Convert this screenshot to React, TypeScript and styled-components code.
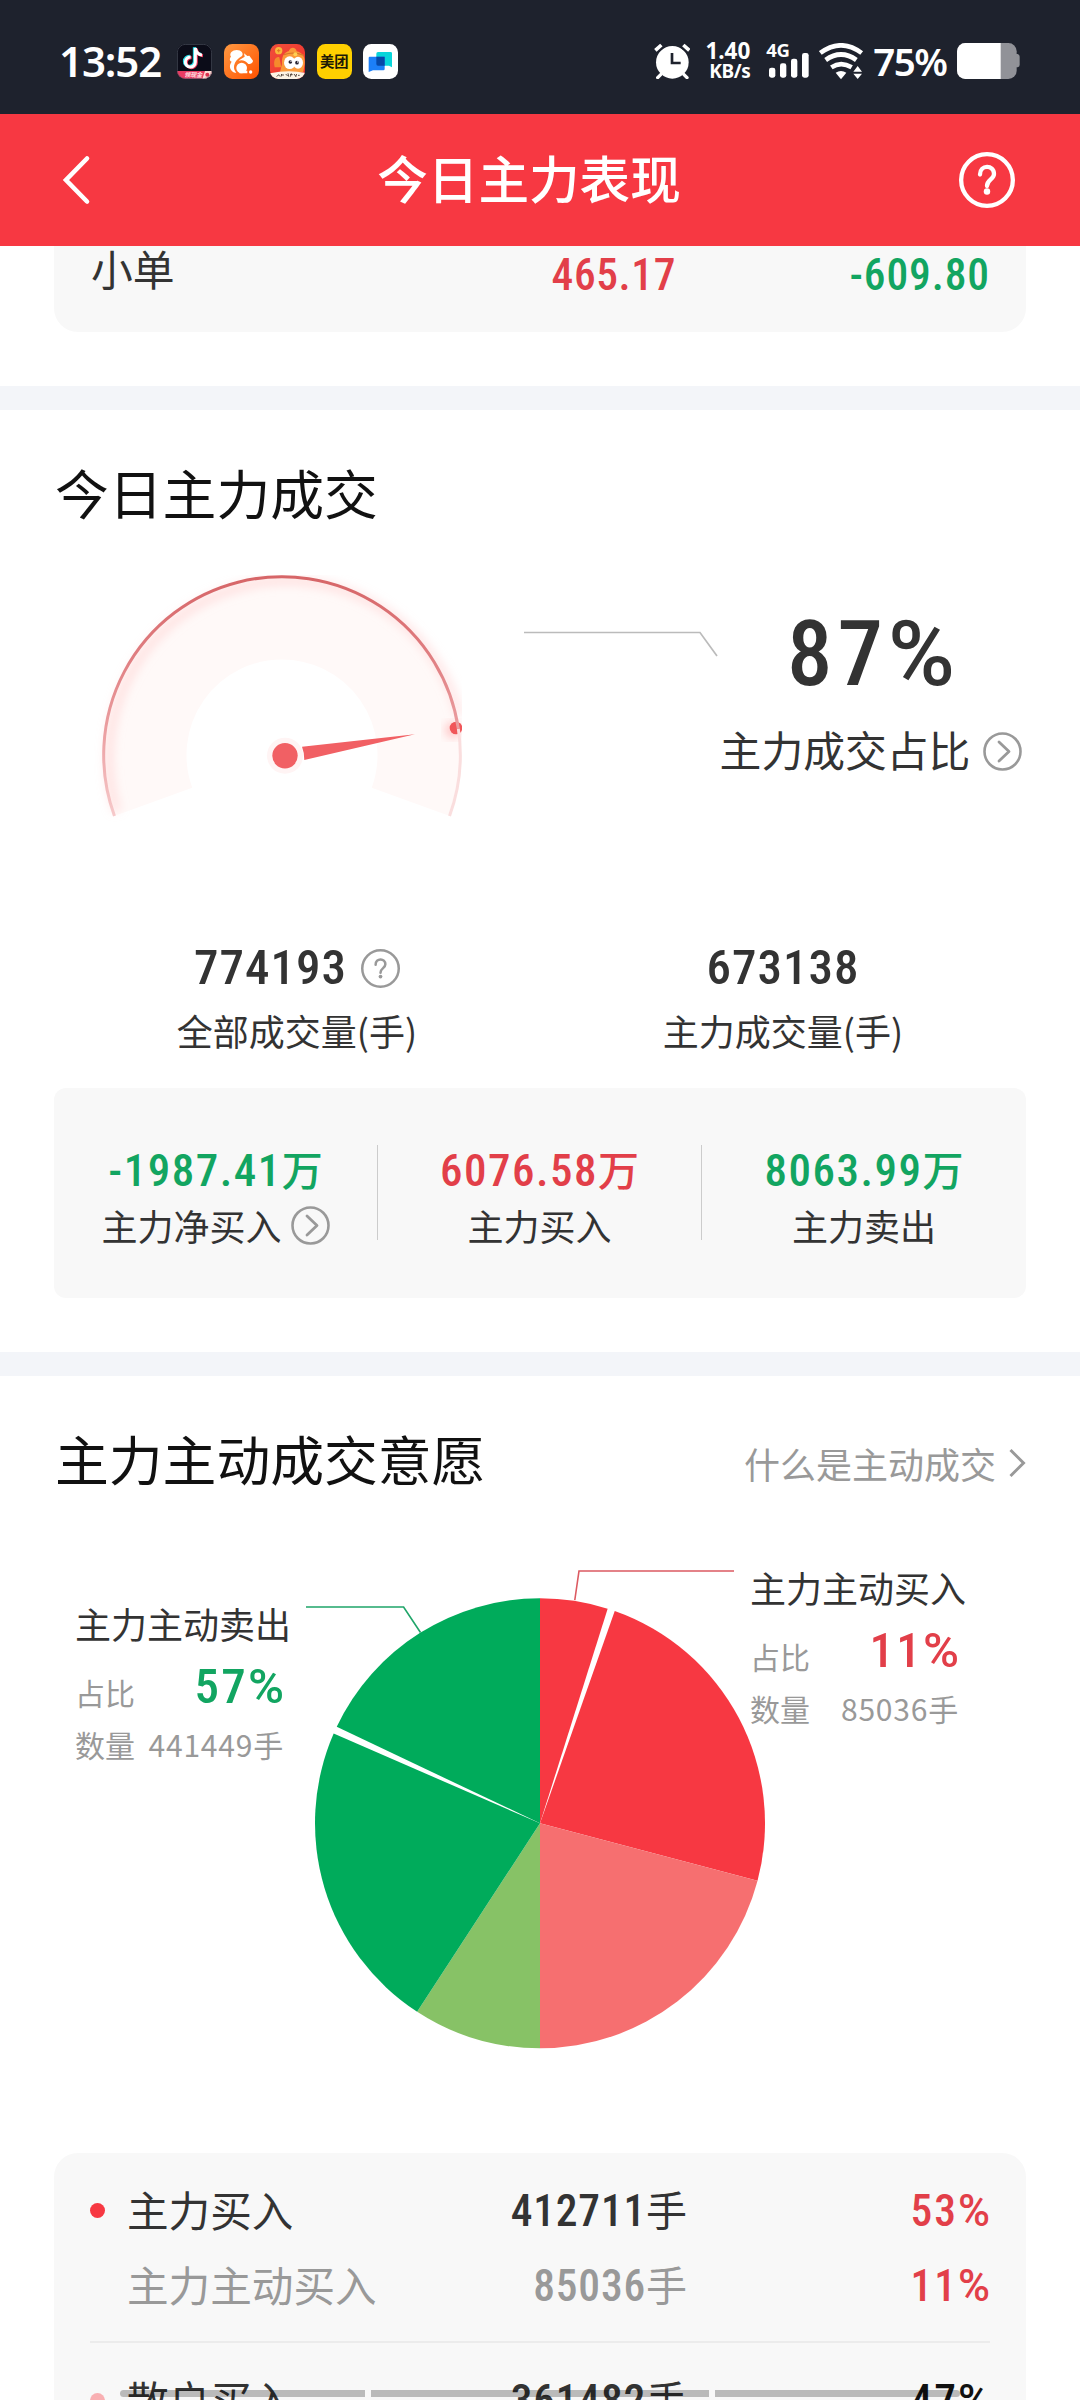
import React from 'react';
import styled, { createGlobalStyle } from 'styled-components';

const RED = '#f73842';
const RED_TEXT = '#e23f49';
const GREEN = '#00ab5b';
const GREEN_TEXT = '#12a561';
const INK = '#333333';
const MUTED = '#999999';

const CJK = `'Noto Sans CJK SC', 'Noto Sans', sans-serif`;
const DIN = `'Roboto Condensed', Roboto, 'Noto Sans CJK SC', sans-serif`;

const GlobalStyle = createGlobalStyle`
  html, body { margin: 0; padding: 0; background: #fff; }
  * { box-sizing: border-box; }
  svg { display: block; flex: none; }
`;

const Page = styled.div`
  position: relative;
  width: 1080px;
  height: 2400px;
  overflow: hidden;
  background: #fff;
  color: ${INK};
  font-family: ${CJK};
`;

/* ---------- status bar ---------- */

const StatusBar = styled.div`
  display: flex;
  align-items: center;
  height: 114px;
  padding: 8px 60px 0 59px;
  background: #1e222d;
  color: #fff;
  font-family: 'Noto Sans', sans-serif;
`;

const Clock = styled.div`
  width: 118px;
  font-size: 42px;
  line-height: 44px;
  font-weight: 600;
  letter-spacing: -1.1px;
  white-space: nowrap;
`;

const AppIcons = styled.div`
  display: flex;
  gap: 11.6px;
  flex: 1;
`;

const StatusRight = styled.div`
  display: flex;
  align-items: center;
`;

const Speed = styled.div`
  display: flex;
  flex-direction: column;
  align-items: flex-end;
  width: 60px;
  font-weight: 700;
`;

const SpeedValue = styled.span`
  font-size: 22.5px;
  line-height: 20px;
`;

const SpeedUnit = styled.span`
  font-size: 19px;
  line-height: 20px;
  letter-spacing: -0.4px;
`;

const Signal = styled.div`
  display: flex;
  flex-direction: column;
  align-items: flex-start;
  width: 50px;
  height: 36px;
  margin-left: 19px;
`;

const SignalLabel = styled.span`
  height: 10px;
  margin-left: -3px;
  font-size: 18.5px;
  line-height: 13px;
  font-weight: 700;
  letter-spacing: -0.5px;
`;

const BatteryText = styled.span`
  width: 84px;
  margin-left: 9px;
  font-size: 38.5px;
  line-height: 40px;
  font-weight: 600;
  letter-spacing: -1.6px;
  white-space: nowrap;
`;

/* ---------- header ---------- */

const Header = styled.div`
  display: flex;
  align-items: center;
  justify-content: space-between;
  height: 132px;
  padding: 0 65px 0 61px;
  background: ${RED};
`;

const HeaderTitle = styled.h1`
  margin: 0;
  padding: 0 0 7px 6px;
  font-size: 50.6px;
  line-height: 60px;
  font-weight: 500;
  color: #fff;
`;

/* ---------- shared ---------- */

const Num = styled.span<{ $size: number; $color?: string; $spacing?: number }>`
  display: block;
  font-family: ${DIN};
  font-size: ${p => p.$size}px;
  font-weight: 500;
  letter-spacing: ${p => p.$spacing ?? 0}px;
  color: ${p => p.$color ?? INK};
  white-space: nowrap;
`;

const PercentSign = styled.span`
  font-family: Roboto, sans-serif;
  letter-spacing: 0;
`;

const Band = styled.div`
  height: 24px;
  background: #f3f5f9;
`;

const Section = styled.section`
  padding: 45px 54px 0;
`;

const SectionHead = styled.div`
  display: flex;
  align-items: center;
  justify-content: space-between;
  height: 72px;
`;

const SectionTitle = styled.h2`
  margin: 0;
  padding: 1px 0 0 1px;
  font-size: 53.8px;
  line-height: 72px;
  font-weight: 400;
  color: #111;
`;

/* ---------- order size table tail ---------- */

const OrderCard = styled.div`
  display: grid;
  grid-template-columns: 585px 1fr;
  height: 86px;
  margin: 0 54px 54px;
  padding: 0 36px 0 37px;
  border-radius: 0 0 24px 24px;
  background: #f8f8f8;
`;

const OrderLeft = styled.div`
  display: flex;
  justify-content: space-between;
  line-height: 59px;
`;

const OrderLabel = styled.span`
  font-size: 41.8px;
  line-height: 45px;
`;

const OrderRight = styled.div`
  text-align: right;
  line-height: 59px;
`;

/* ---------- gauge ---------- */

const GaugeRow = styled.div`
  display: flex;
  height: 280px;
  margin-top: 33px;
`;

const Callout = styled.div`
  width: 226px;
  padding: 60px 0 0 24px;
`;

const RatioBlock = styled.div`
  display: flex;
  flex-direction: column;
  align-items: center;
  width: 302px;
  padding-top: 44px;
`;

const RatioValue = styled(Num)`
  line-height: 100px;
`;

const RatioLabel = styled.div`
  display: flex;
  align-items: center;
  gap: 13px;
  height: 44px;
  margin-top: 25px;
  font-size: 41.8px;
  line-height: 38px;
  white-space: nowrap;
`;

const LabelText = styled.span`
  padding-bottom: 5px;
`;

const Totals = styled.div`
  display: grid;
  grid-template-columns: 1fr 1fr;
  margin-top: 100px;
`;

const TotalCell = styled.div`
  display: flex;
  flex-direction: column;
  align-items: center;
`;

const TotalValue = styled.div`
  display: flex;
  align-items: center;
  gap: 14px;
  height: 56px;
  line-height: 56px;
`;

const TotalLabel = styled.div`
  margin-top: 10px;
  font-size: 36px;
  line-height: 48px;
`;

const StatsCard = styled.div`
  display: grid;
  grid-template-columns: repeat(3, 1fr);
  align-items: start;
  height: 210px;
  margin: 34px 0 54px;
  padding-top: 57px;
  border-radius: 12px;
  background: #f8f8f8;
`;

const StatCell = styled.div`
  display: flex;
  flex-direction: column;
  align-items: center;
  height: 95px;
  &:not(:last-child) { border-right: 1px solid #ccc; }
`;

const StatValue = styled(Num)`
  line-height: 52px;
`;

const StatLabel = styled.div`
  display: flex;
  align-items: center;
  gap: 9px;
  height: 40px;
  margin-top: 7px;
  font-size: 36px;
  line-height: 40px;
`;

/* ---------- pie ---------- */

const MoreLink = styled.div`
  display: flex;
  align-items: center;
  gap: 12px;
  padding-top: 11px;
  font-size: 36px;
  line-height: 48px;
  color: ${MUTED};
`;

const Chart = styled.div`
  display: grid;
  height: 660px;
  margin: 0 -54px;
  & > * { grid-area: 1 / 1; }
`;

const PieLabel = styled.div<{ $left: number; $top: number }>`
  width: 209px;
  margin: ${p => p.$top}px 0 0 ${p => p.$left}px;
  align-self: start;
`;

const PieName = styled.div`
  font-size: 36px;
  line-height: 44px;
  white-space: nowrap;
`;

const PieRow = styled.div<{ $h: number; $gap: number }>`
  display: flex;
  justify-content: space-between;
  align-items: baseline;
  height: ${p => p.$h}px;
  margin-top: ${p => p.$gap}px;
  font-size: 30px;
  line-height: ${p => p.$h}px;
  color: ${MUTED};
  white-space: nowrap;
`;

const RatioKey = styled.span`
  position: relative;
  top: 2px;
`;

const Quantity = styled.span`
  letter-spacing: 0.8px;
`;

/* ---------- detail table ---------- */

const DetailCard = styled.div`
  height: 300px;
  padding: 20px 36px 0;
  border-radius: 24px 24px 0 0;
  background: #f8f8f8;
`;

const DetailRow = styled.div`
  display: grid;
  grid-template-columns: 37px 1fr 261px 303px;
  align-items: center;
  height: 75px;
  line-height: 58px;
  text-align: right;
  & > ${Num} { padding-top: 2px; }
`;

const Dot = styled.i<{ $color: string }>`
  width: 15px;
  height: 15px;
  border-radius: 50%;
  background: ${p => p.$color};
`;

const DetailName = styled.span<{ $muted?: boolean }>`
  padding-bottom: 4px;
  font-size: 41.6px;
  text-align: left;
  color: ${p => (p.$muted ? MUTED : INK)};
`;

const Unit = styled.span<{ $light?: boolean }>`
  font-size: 41px;
  font-weight: ${p => (p.$light ? 400 : 500)};
  letter-spacing: 0;
`;

const Rule = styled.div`
  height: 2px;
  margin: 18px 0 20px;
  background: #ececec;
`;

const NavHint = styled.div`
  position: absolute;
  left: 120px;
  top: 2390px;
  display: grid;
  grid-template-columns: 245px 338px 245px;
  gap: 6px;
  height: 7px;
`;

const NavPart = styled.i<{ $side?: 'l' | 'r' }>`
  background: rgba(0, 0, 0, 0.25);
  border-radius: ${p => (p.$side === 'l' ? '4px 0 0 4px' : p.$side === 'r' ? '0 4px 4px 0' : '0')};
`;

/* ---------- icons ---------- */

const TikTokIcon = () => (
  <svg width="35" height="35" viewBox="0 0 105 105">
    <defs><clipPath id="tt"><rect width="105" height="105" rx="25" /></clipPath></defs>
    <g clipPath="url(#tt)">
      <rect width="105" height="105" fill="#0b0c18" />
      <g fill="none" strokeWidth="9">
        <g stroke="#25d9e6" transform="translate(-3,-2)"><path d="M41 39a15 15 0 1 0 14 15V12c2 13 9 20 20 21" /></g>
        <g stroke="#f23a5d" transform="translate(3,2)"><path d="M41 39a15 15 0 1 0 14 15V12c2 13 9 20 20 21" /></g>
        <path d="M41 39a15 15 0 1 0 14 15V12c2 13 9 20 20 21" stroke="#fff" />
      </g>
      <path d="M0 81H105V105H0Z" fill="#e93c63" />
      <path d="M84 81H105V105H76Z" fill="#ffd9d2" />
      <circle cx="91" cy="92" r="6" fill="#d9304e" />
      <text x="22" y="100" fontSize="18" fontWeight="700" fontStyle="italic" fill="#ffe3e3" fontFamily="Noto Sans CJK SC, sans-serif">领现金</text>
      <rect x="1" y="1" width="103" height="103" rx="24" fill="none" stroke="#555a66" strokeWidth="2" />
    </g>
  </svg>
);

const SquirrelIcon = () => (
  <svg width="35" height="35" viewBox="0 0 105 105">
    <defs>
      <linearGradient id="uc" x1="0" y1="0" x2="1" y2="1">
        <stop offset="0" stopColor="#ff9a42" /><stop offset="1" stopColor="#ff5200" />
      </linearGradient>
    </defs>
    <rect width="105" height="105" rx="25" fill="url(#uc)" />
    <path d="M27 84C15 74 16 62 23 53C15 50 17 42 21 38C14 28 26 18 38 18C52 18 60 28 54 36C42 43 30 54 30 70C30 77 33 82 37 86C33 87 30 86 27 84Z" fill="#fff" />
    <path d="M44 50C48 46 56 42 62 38L60 28L70 36L76 35L87 50C86 58 78 60 73 60C66 50 54 46 44 50Z" fill="#fff" />
    <circle cx="53" cy="72" r="16" fill="#fff" />
    <path d="M52 80H70V88H46Z" fill="#fff" />
    <circle cx="80" cy="84" r="5" fill="#fff" />
  </svg>
);

const MonkeyIcon = () => (
  <svg width="35" height="35" viewBox="0 0 105 105">
    <defs>
      <clipPath id="mk"><rect width="105" height="105" rx="25" /></clipPath>
      <linearGradient id="mkbg" x1="0" y1="0" x2="1" y2="1">
        <stop offset="0" stopColor="#f0503a" /><stop offset="1" stopColor="#f02c2c" />
      </linearGradient>
    </defs>
    <g clipPath="url(#mk)">
      <rect width="105" height="105" fill="url(#mkbg)" />
      <path d="M14 70C8 46 20 36 28 40L34 70Z" fill="#f58a2c" />
      <path d="M36 60C34 34 46 24 56 22C62 6 78 10 80 22C98 26 106 40 104 60L100 84H30Z" fill="#fb9a3a" />
      <path d="M42 32Q70 22 102 34" stroke="#d8782a" strokeWidth="4" fill="none" />
      <circle cx="76" cy="31" r="6" fill="#ffcf52" />
      <circle cx="26" cy="20" r="11" fill="#f9b83c" />
      <path d="M21 20H31M26 15V25" stroke="#e27a20" strokeWidth="3" />
      <ellipse cx="59" cy="56" rx="17" ry="19" fill="#fff" />
      <ellipse cx="84" cy="56" rx="15" ry="18" fill="#fff" />
      <circle cx="61" cy="54" r="5.5" fill="#282432" />
      <circle cx="81" cy="56" r="5.5" fill="#282432" />
      <circle cx="63" cy="52" r="2" fill="#fff" />
      <circle cx="83" cy="54" r="2" fill="#fff" />
      <path d="M0 88Q52 76 105 86V105H0Z" fill="#fbf3e4" />
      <path d="M20 98l6-6 3 5M35 90l-2 8M34 93h8M47 90l6 6M54 88l2 10M60 92h8M64 88l-3 10M72 90l6 8M80 90l-3 8M84 94h5" stroke="#3a2a22" strokeWidth="2.5" fill="none" />
    </g>
  </svg>
);

const MeituanIcon = () => (
  <svg width="35" height="35" viewBox="0 0 105 105">
    <rect width="105" height="105" rx="25" fill="#ffd000" />
    <text x="52" y="68" textAnchor="middle" fontSize="43" fontWeight="700" fill="#1d1a06" fontFamily="Noto Sans CJK SC, sans-serif">美团</text>
  </svg>
);

const ChatIcon = () => (
  <svg width="35" height="35" viewBox="0 0 105 105">
    <rect width="105" height="105" rx="25" fill="#fff" />
    <path d="M45 24H83Q87 24 87 28V70L78 65H40V29Q40 24 45 24Z" fill="#08d5da" />
    <path d="M20 38H65V75Q65 79 61 79H30L17 84V42Q17 38 20 38Z" fill="#1c7ff8" />
    <path d="M40 38H65V65H45Q40 65 40 60Z" fill="#0648a8" />
  </svg>
);

const AlarmIcon = () => (
  <svg width="36.7" height="36.3" viewBox="42 39 110 109">
    <circle cx="97" cy="97" r="49" fill="#fff" />
    <path d="M62 134L53 143M132 134L141 143" stroke="#fff" strokeWidth="10" strokeLinecap="round" />
    <path d="M46 63L66 46M148 63L128 46" stroke="#1e222d" strokeWidth="20" />
    <path d="M46 61L64 45M148 61L130 45" stroke="#fff" strokeWidth="11" />
    <path d="M96 69V99H122" stroke="#1e222d" strokeWidth="8" fill="none" />
  </svg>
);

const SignalBars = () => (
  <svg width="40" height="25" viewBox="387 73 120 75">
    <g fill="#fff">
      <rect x="387" y="117" width="19" height="30" rx="7" />
      <rect x="420" y="104" width="19" height="43" rx="7" />
      <rect x="453" y="90" width="19" height="57" rx="7" />
      <rect x="486" y="73" width="20" height="74" rx="7" />
    </g>
  </svg>
);

const WifiIcon = () => (
  <svg width="45" height="37" viewBox="538 38 135 111">
    <g fill="none" stroke="#fff" strokeWidth="14">
      <path d="M542 68Q604 22 666 68" />
      <path d="M558 89Q604 56 650 89" />
      <path d="M575 111Q604 92 636 111" />
    </g>
    <path d="M588 127Q604 117 620 127L604 147Z" fill="#fff" />
    <path d="M641 124L654 107L667 124ZM641 130L654 146L667 130Z" fill="#fff" />
  </svg>
);

const BatteryIcon = () => (
  <svg width="62.7" height="36" viewBox="952 39 188 108">
    <defs><clipPath id="bt"><rect x="952" y="39" width="179" height="108" rx="25" /></clipPath></defs>
    <path d="M1128 72H1134Q1140 74 1140 80V104Q1140 110 1134 112H1128Z" fill="#919298" />
    <g clipPath="url(#bt)">
      <rect x="952" y="39" width="180" height="108" fill="#919298" />
      <rect x="952" y="39" width="131" height="108" fill="#fff" />
    </g>
  </svg>
);

const BackIcon = () => (
  <svg width="32" height="50" viewBox="0 0 32 50">
    <path d="M26 3.5L5 25L26 46.500" fill="none" stroke="#fff" strokeWidth="4.6" strokeLinecap="round" strokeLinejoin="miter" />
  </svg>
);

const HelpIcon = ({ size, color, stroke }: { size: number; color: string; stroke: number }) => (
  <svg width={size} height={size} viewBox="0 0 56 56">
    <g fill="none" stroke={color} strokeWidth={stroke}>
      <circle cx="28" cy="28" r={28 - stroke / 2} />
      <path d="M21 22.500C21 12.500 35 12.500 35 22C35 27.500 28 27.500 28 34" strokeLinecap="round" />
    </g>
    <circle cx="28" cy="39.500" r={stroke * 0.75} fill={color} />
  </svg>
);

const CircleArrow = () => (
  <svg width="39" height="39" viewBox="0 0 39 39">
    <circle cx="19.500" cy="19.500" r="18" fill="none" stroke={MUTED} strokeWidth="2.6" />
    <path d="M16 10L26 19.500L16 29" fill="none" stroke={MUTED} strokeWidth="2.8" strokeLinecap="round" strokeLinejoin="round" />
  </svg>
);

const LinkArrow = () => (
  <svg width="18" height="32" viewBox="0 0 18 32">
    <path d="M2.500 3L15.500 16L2.500 29" fill="none" stroke={MUTED} strokeWidth="3" />
  </svg>
);

/* ---------- charts ---------- */

const polar = (cx: number, cy: number, r: number, deg: number) => {
  const a = ((deg - 90) * Math.PI) / 180;
  return `${(cx + r * Math.cos(a)).toFixed(2)} ${(cy + r * Math.sin(a)).toFixed(2)}`;
};

const arc = (cx: number, cy: number, r: number, from: number, to: number) =>
  `M${polar(cx, cy, r, from)}A${r} ${r} 0 ${to - from > 180 ? 1 : 0} 1 ${polar(cx, cy, r, to)}`;

const wedge = (from: number, to: number) =>
  `M540 1823.3L${arc(540, 1823.3, 225, from, to).slice(1)}Z`;

const slices = [
  { from: 0, to: 17.5, color: RED },
  { from: 19.4, to: 104.8, color: RED },
  { from: 104.8, to: 180, color: '#f66f70' },
  { from: 180, to: 213.1, color: '#87c266' },
  { from: 213.1, to: 293.5, color: GREEN },
  { from: 295.4, to: 360, color: GREEN },
];

const Gauge = () => (
  <svg width="440" height="280" viewBox="54 560 440 280">
    <defs>
      <linearGradient id="rim" gradientUnits="userSpaceOnUse" x1="0" y1="575" x2="0" y2="816">
        <stop offset="0" stopColor="#d66567" />
        <stop offset="0.35" stopColor="#e07f82" />
        <stop offset="0.7" stopColor="#eda5a7" />
        <stop offset="1" stopColor="#f6c9ca" />
      </linearGradient>
      <filter id="soft" x="-20%" y="-20%" width="140%" height="140%"><feGaussianBlur stdDeviation="5" /></filter>
      <clipPath id="frame"><rect x="90" y="575" width="372" height="250" /></clipPath>
    </defs>
    <path d={arc(282, 755, 137, -110, 110)} fill="none" stroke="#fff9f8" strokeWidth="83" />
    <g clipPath="url(#frame)">
      <path d={arc(287, 759, 178, -107, 76)} fill="none" stroke="#ffc4c4" strokeOpacity="0.42" strokeWidth="9" filter="url(#soft)" />
      <circle cx="453" cy="730" r="8" fill="#f99" opacity="0.5" filter="url(#soft)" />
      <circle cx="456" cy="728" r="6.300" fill="#f05659" />
    </g>
    <path d={arc(282, 755, 178.3, 81.5, 110)} fill="none" stroke="#fadede" strokeWidth="3" />
    <path d={arc(282, 755, 178.3, -110, 81.5)} fill="none" stroke="url(#rim)" strokeWidth="3" />
    <circle cx="285" cy="755.700" r="18" fill="#fff4f4" />
    <circle cx="285" cy="755.700" r="12.700" fill="#f16064" />
    <path d="M302 746.700L415 734.300L304.300 760Q304.500 753 302 746.700Z" fill="#f16064" />
  </svg>
);

const Pie = () => (
  <svg width="1080" height="660" viewBox="0 1493 1080 660">
    {slices.map(s => <path key={s.from} d={wedge(s.from, s.to)} fill={s.color} />)}
    <path d="M306 1607H403.600L420.500 1632.500" fill="none" stroke="#1fa569" strokeWidth="1.600" />
    <path d="M734 1571H579L574.800 1600" fill="none" stroke="#dc5a61" strokeWidth="1.600" />
  </svg>
);

const Percent = ({ value, size, color }: { value: number; size: number; color?: string }) => (
  <Num $size={size} $color={color} $spacing={size * 0.045}>
    {value}<PercentSign>%</PercentSign>
  </Num>
);

const Lots = ({ value, color }: { value: number; color?: string }) => (
  <Num $size={43.5} $color={color} $spacing={0.8}>{value}<Unit $light>手</Unit></Num>
);

const pieLabels = [
  { name: '主力主动卖出', pct: 57, qty: '441449手', color: GREEN_TEXT, left: 75, top: 108 },
  { name: '主力主动买入', pct: 11, qty: '85036手', color: RED_TEXT, left: 750, top: 72 },
];

const stats = [
  { value: '-1987.41', label: '主力净买入', color: GREEN_TEXT, link: true },
  { value: '6076.58', label: '主力买入', color: RED_TEXT, link: false },
  { value: '8063.99', label: '主力卖出', color: GREEN_TEXT, link: false },
];

export default function App() {
  return (
    <Page>
      <GlobalStyle />
      <StatusBar>
        <Clock>13:52</Clock>
        <AppIcons>
          <TikTokIcon /><SquirrelIcon /><MonkeyIcon /><MeituanIcon /><ChatIcon />
        </AppIcons>
        <StatusRight>
          <AlarmIcon />
          <Speed><SpeedValue>1.40</SpeedValue><SpeedUnit>KB/s</SpeedUnit></Speed>
          <Signal><SignalLabel>4G</SignalLabel><SignalBars /></Signal>
          <WifiIcon />
          <BatteryText>75%</BatteryText>
          <BatteryIcon />
        </StatusRight>
      </StatusBar>

      <Header>
        <BackIcon />
        <HeaderTitle>今日主力表现</HeaderTitle>
        <HelpIcon size={56} color="#fff" stroke={4.3} />
      </Header>

      <OrderCard>
        <OrderLeft>
          <OrderLabel>小单</OrderLabel>
          <Num $size={43.5} $color={RED_TEXT} $spacing={0.6}>465.17</Num>
        </OrderLeft>
        <OrderRight><Num $size={43.5} $color={GREEN_TEXT} $spacing={0.9}>-609.80</Num></OrderRight>
      </OrderCard>

      <Band />

      <Section>
        <SectionHead><SectionTitle>今日主力成交</SectionTitle></SectionHead>
        <GaugeRow>
          <Gauge />
          <Callout>
            <svg width="200" height="44" viewBox="518 620 200 44">
              <path d="M524 632.500H700L717 656" fill="none" stroke="#bbb" strokeWidth="1.700" />
            </svg>
          </Callout>
          <RatioBlock>
            <RatioValue $size={91} $spacing={5}>87<PercentSign>%</PercentSign></RatioValue>
            <RatioLabel><LabelText>主力成交占比</LabelText><CircleArrow /></RatioLabel>
          </RatioBlock>
        </GaugeRow>
        <Totals>
          <TotalCell>
            <TotalValue><Num $size={49} $spacing={1}>774193</Num><HelpIcon size={39} color={MUTED} stroke={3.6} /></TotalValue>
            <TotalLabel>全部成交量(手)</TotalLabel>
          </TotalCell>
          <TotalCell>
            <TotalValue><Num $size={49} $spacing={1}>673138</Num></TotalValue>
            <TotalLabel>主力成交量(手)</TotalLabel>
          </TotalCell>
        </Totals>
        <StatsCard>
          {stats.map(s => (
            <StatCell key={s.label}>
              <StatValue $size={45} $color={s.color} $spacing={1.5}>{s.value}<Unit>万</Unit></StatValue>
              <StatLabel>{s.label}{s.link && <CircleArrow />}</StatLabel>
            </StatCell>
          ))}
        </StatsCard>
      </Section>

      <Band />

      <Section>
        <SectionHead>
          <SectionTitle>主力主动成交意愿</SectionTitle>
          <MoreLink>什么是主动成交<LinkArrow /></MoreLink>
        </SectionHead>
        <Chart>
          <Pie />
          {pieLabels.map(l => (
            <PieLabel key={l.name} $left={l.left} $top={l.top}>
              <PieName>{l.name}</PieName>
              <PieRow $h={48} $gap={18}><RatioKey>占比</RatioKey><Percent value={l.pct} size={49} color={l.color} /></PieRow>
              <PieRow $h={36} $gap={15}><span>数量</span><Quantity>{l.qty}</Quantity></PieRow>
            </PieLabel>
          ))}
        </Chart>
        <DetailCard>
          <DetailRow>
            <Dot $color={RED} />
            <DetailName>主力买入</DetailName>
            <Lots value={412711} />
            <Percent value={53} size={43.5} color={RED_TEXT} />
          </DetailRow>
          <DetailRow>
            <span />
            <DetailName $muted>主力主动买入</DetailName>
            <Lots value={85036} color={MUTED} />
            <Percent value={11} size={43.5} color={RED_TEXT} />
          </DetailRow>
          <Rule />
          <DetailRow>
            <Dot $color="#f9b0b3" />
            <DetailName>散户买入</DetailName>
            <Lots value={361482} />
            <Percent value={47} size={43.5} color="#111" />
          </DetailRow>
        </DetailCard>
      </Section>

      <NavHint><NavPart $side="l" /><NavPart /><NavPart $side="r" /></NavHint>
    </Page>
  );
}
